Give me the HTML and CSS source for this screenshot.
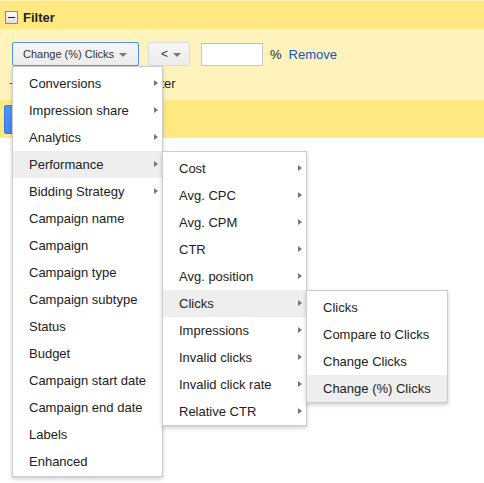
FILE: index.html
```html
<!DOCTYPE html>
<html>
<head>
<meta charset="utf-8">
<link rel="stylesheet" href="styles.css">
</head>
<body>
<div class="page">
  <div class="header">
    <span class="toggle"><span class="minus"></span></span>
    <span class="title">Filter</span>
  </div>
  <div class="body">
    <div class="row">
      <div class="btn btn-focus">Change (%) Clicks <span class="caret"></span></div>
      <div class="btn btn-op">&lt; <span class="caret"></span></div>
      <div class="input"></div>
      <span class="pct">%</span>
      <span class="link">Remove</span>
    </div>
    <div class="row2">
      <span class="plus">+</span>
      <span class="add">Add another filter</span>
    </div>
  </div>
  <div class="band">
    <div class="apply"></div>
  </div>

  <div class="menu m1">
    <div class="item sub">Conversions</div>
    <div class="item sub">Impression share</div>
    <div class="item sub">Analytics</div>
    <div class="item sub hl">Performance</div>
    <div class="item sub">Bidding Strategy</div>
    <div class="item">Campaign name</div>
    <div class="item">Campaign</div>
    <div class="item">Campaign type</div>
    <div class="item">Campaign subtype</div>
    <div class="item">Status</div>
    <div class="item">Budget</div>
    <div class="item">Campaign start date</div>
    <div class="item">Campaign end date</div>
    <div class="item">Labels</div>
    <div class="item">Enhanced</div>
  </div>
  <div class="menu m2">
    <div class="item sub">Cost</div>
    <div class="item sub">Avg. CPC</div>
    <div class="item sub">Avg. CPM</div>
    <div class="item sub">CTR</div>
    <div class="item sub">Avg. position</div>
    <div class="item sub hl">Clicks</div>
    <div class="item sub">Impressions</div>
    <div class="item sub">Invalid clicks</div>
    <div class="item sub">Invalid click rate</div>
    <div class="item sub">Relative CTR</div>
  </div>
  <div class="menu m3">
    <div class="item">Clicks</div>
    <div class="item">Compare to Clicks</div>
    <div class="item">Change Clicks</div>
    <div class="item hl">Change (%) Clicks</div>
  </div>
</div>
</body>
</html>
```

FILE: styles.css
```css
html, body {
  margin: 0;
  padding: 0;
  background: #fff;
}
.page {
  position: relative;
  width: 484px;
  height: 483px;
  overflow: hidden;
  font-family: Arial, "Liberation Sans", sans-serif;
  font-size: 13px;
  color: #222;
}
.header {
  box-sizing: border-box;
  height: 29px;
  background: #ffe980;
  border-top: 1px solid #fff0b0;
  padding: 4px 0 0 5px;
  display: flex;
  align-items: center;
}
.toggle {
  box-sizing: border-box;
  width: 13px;
  height: 13px;
  border: 1px solid #8a8a8a;
  background: linear-gradient(#fafafa, #e2e2e2);
  display: flex;
  align-items: center;
  justify-content: center;
}
.minus {
  width: 7px;
  height: 1px;
  background: #222;
}
.title {
  font-weight: bold;
  margin-left: 5px;
  color: #222;
}
.body {
  box-sizing: border-box;
  height: 71px;
  background: #fff3bd;
  padding: 13px 0 0 12px;
}
.row {
  display: flex;
  align-items: center;
  height: 24px;
}
.btn {
  box-sizing: border-box;
  height: 24px;
  display: flex;
  align-items: center;
  font-size: 11px;
  color: #333;
  background: linear-gradient(#f6f6f6, #ececec);
  border: 1px solid #dcdcdc;
  border-radius: 2px;
}
.btn-focus {
  width: 127px;
  padding-left: 10px;
  border-color: #4d90fe;
}
.btn-op {
  width: 42px;
  margin-left: 9px;
  padding-left: 12px;
  font-size: 12px;
}
.caret {
  display: inline-block;
  width: 0;
  height: 0;
  border-left: 4px solid transparent;
  border-right: 4px solid transparent;
  border-top: 4px solid #777;
  margin-left: 5px;
  margin-top: 1px;
}
.input {
  box-sizing: border-box;
  width: 62px;
  height: 23px;
  margin-left: 11px;
  background: #fff;
  border: 1px solid #c8c8c8;
  border-top-color: #bbb;
}
.pct {
  margin-left: 7px;
  font-size: 13px;
  color: #222;
}
.link {
  margin-left: 7px;
  color: #15c;
}
.row2 {
  display: flex;
  align-items: center;
  height: 17px;
  margin-top: 9px;
  margin-left: -3px;
}
.plus {
  color: #15c;
}
.add {
  margin-left: 60px;
  color: #222;
}
.band {
  box-sizing: border-box;
  height: 38px;
  background: #ffe980;
  padding: 5px 0 0 4px;
}
.apply {
  box-sizing: border-box;
  width: 60px;
  height: 29px;
  background: linear-gradient(#4d90fe, #4787ed);
  border: 1px solid #3079ed;
  border-radius: 2px;
}
.menu {
  position: absolute;
  box-sizing: border-box;
  background: #fff;
  border: 1px solid rgba(0, 0, 0, 0.2);
  box-shadow: 0 2px 4px rgba(0, 0, 0, 0.2);
  padding: 3px 0 0;
}
.m1 {
  left: 12px;
  top: 66px;
  width: 151px;
  height: 411px;
}
.m2 {
  left: 162px;
  top: 151px;
  width: 145px;
  height: 275px;
}
.m3 {
  left: 306px;
  top: 290px;
  width: 142px;
  height: 113px;
}
.item {
  position: relative;
  height: 27px;
  line-height: 27px;
  padding-left: 16px;
  white-space: nowrap;
  color: #222;
}
.item.hl {
  background: #eee;
}
.item.sub::after {
  content: "";
  position: absolute;
  right: 4px;
  top: 10px;
  width: 0;
  height: 0;
  border-left: 4px solid #777;
  border-top: 3.5px solid transparent;
  border-bottom: 3.5px solid transparent;
}
```
